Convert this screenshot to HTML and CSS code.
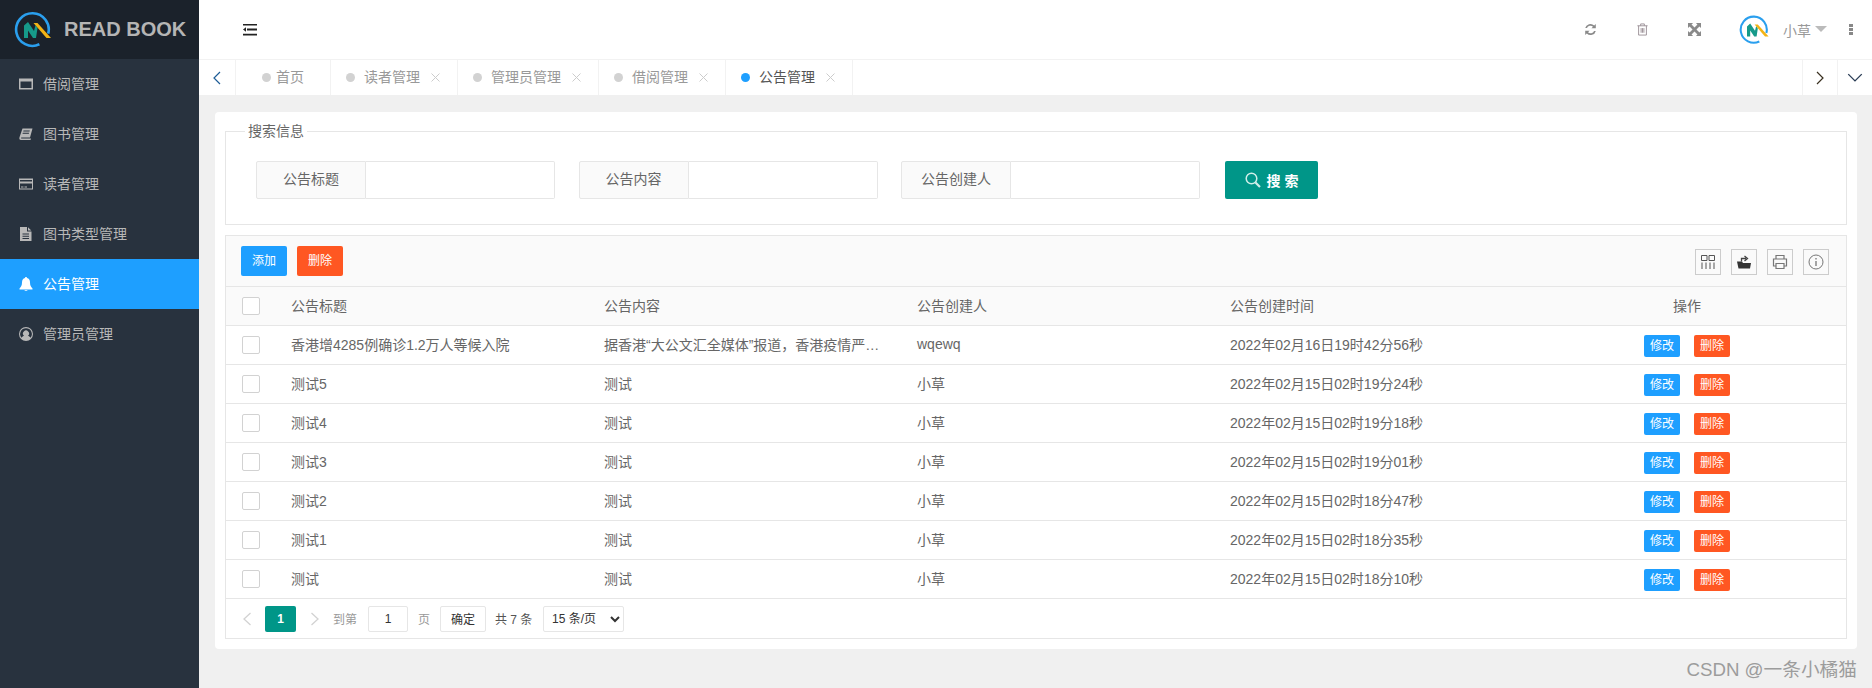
FILE: index.html
```html
<!DOCTYPE html>
<html lang="zh-CN">
<head>
<meta charset="utf-8">
<title>READ BOOK</title>
<link rel="stylesheet" href="styles.css">
</head>
<body>
<svg class="sprite" aria-hidden="true">
  <symbol id="logo" viewBox="0 0 40 40">
    <path d="M34.2 23.7A16.3 16.3 0 1 0 25.4 34.3" fill="none" stroke="#2a9fee" stroke-width="2.6"/>
    <path d="M10 28V15.5L14 12L20 21L21.5 15L23.5 18L22 28H19L14 20.5V28Z" fill="#169a8a"/>
    <path d="M19.5 13H23.5L37 28H32.5Z" fill="#f2b316"/>
  </symbol>
</svg>
<div class="app">
  <aside class="sidebar">
    <div class="brand">
      <svg class="brand-logo"><use href="#logo"/></svg>
      <span class="brand-name">READ BOOK</span>
    </div>
    <nav class="menu">
      <a class="menu-item">
        <svg class="menu-icon" viewBox="0 0 14 14"><path d="M0 1.500H14V12.500H0ZM1.500 4.500V11H12.500V4.500Z" fill="currentColor" fill-rule="evenodd"/></svg>
        <span>借阅管理</span>
      </a>
      <a class="menu-item">
        <svg class="menu-icon" viewBox="0 0 14 14"><path d="M3.500 1.500H13.500L11 10.500H2.500C1.800 10.500 1.800 11.500 2.500 11.500H12L11.500 13H2C0.500 13 0 11.800 0.500 10.300ZM4.500 3.500L4.200 4.500H10.500L10.800 3.500ZM3.800 5.800L3.500 6.800H9.800L10.100 5.800Z" fill="currentColor" fill-rule="evenodd"/></svg>
        <span>图书管理</span>
      </a>
      <a class="menu-item">
        <svg class="menu-icon" viewBox="0 0 14 14"><path d="M0 1.500H14V12.500H0ZM1 3V4.500H13V3ZM1 6.500V11.500H13V6.500ZM2 9.500H4.500V10.500H2ZM5.500 9.500H8V10.500H5.500Z" fill="currentColor" fill-rule="evenodd"/></svg>
        <span>读者管理</span>
      </a>
      <a class="menu-item">
        <svg class="menu-icon" viewBox="0 0 14 14"><path d="M1 0H8V4.500H12.500V14H1ZM9 0.200L12.300 3.500H9ZM3.500 6.500V7.500H10V6.500ZM3.500 8.800V9.800H10V8.800ZM3.500 11V12H10V11Z" fill="currentColor" fill-rule="evenodd"/></svg>
        <span>图书类型管理</span>
      </a>
      <a class="menu-item is-active">
        <svg class="menu-icon" viewBox="0 0 14 14"><path d="M7 0C7.600 0 8 .4 8 1C10 1.500 11 3 11 5.500C11 8.500 12 10 13.500 11.500V12.500H.5V11.500C2 10 3 8.500 3 5.500C3 3 4 1.500 6 1C6 .4 6.400 0 7 0ZM5.300 13.200H8.700C8.500 14.200 5.500 14.200 5.300 13.200Z" fill="currentColor"/></svg>
        <span>公告管理</span>
      </a>
      <a class="menu-item">
        <svg class="menu-icon" viewBox="0 0 14 14"><path d="M7 0A7 7 0 1 1 7 14A7 7 0 0 1 7 0ZM7 1.200A5.800 5.800 0 0 0 2.500 10.700C3.200 9.500 4.200 8.900 5 8.700A3 3 0 1 1 9 8.700C9.800 8.900 10.800 9.500 11.500 10.700A5.800 5.800 0 0 0 7 1.200Z" fill="currentColor" fill-rule="evenodd"/></svg>
        <span>管理员管理</span>
      </a>
    </nav>
  </aside>

  <main class="main">
    <header class="topbar">
      <svg class="toggle" viewBox="0 0 14 12"><path d="M0 0H14V1.600H0ZM4 4.500H14V6.500H4ZM0 9.800H14V11.400H0ZM3 3.200V7.800L0 5.500Z" fill="#222"/></svg>
      <div class="top-actions">
        <span class="top-action">
          <svg class="top-icon" viewBox="0 0 14 14"><path d="M1.300 5.500A5.800 5.800 0 0 1 11 2.700L12.700 1V5.700H8L9.700 4A4 4 0 0 0 3.200 5.500ZM12.700 8.500A5.800 5.800 0 0 1 3 11.300L1.300 13V8.300H6L4.300 10A4 4 0 0 0 10.800 8.500Z" fill="#8a8a8a"/></svg>
        </span>
        <span class="top-action">
          <svg class="top-icon" viewBox="0 0 14 14"><path d="M1.500 3H12.500M5 3V1H9V3M2.800 3V13H11.200V3M5.500 5.500V10.500M7 5.500V10.500M8.500 5.500V10.500" fill="none" stroke="#9a9096" stroke-width="1"/></svg>
        </span>
        <span class="top-action">
          <svg class="top-icon" viewBox="0 0 14 14"><path d="M0 0H5.500L3.800 1.700L7 4.900L10.200 1.700L8.500 0H14V5.500L12.300 3.800L9.100 7L12.300 10.200L14 8.500V14H8.500L10.200 12.300L7 9.100L3.800 12.300L5.500 14H0V8.500L1.700 10.200L4.900 7L1.700 3.800L0 5.500Z" fill="#8a8a8a"/></svg>
        </span>
        <svg class="avatar"><use href="#logo"/></svg>
        <span class="user-name">小草</span>
        <span class="caret"></span>
        <span class="kebab"><i></i><i></i><i></i></span>
      </div>
    </header>

    <div class="tabs">
      <span class="tab-arrow tab-arrow-left">
        <svg class="chev" viewBox="0 0 8 14"><path d="M7 1L1 7L7 13" fill="none" stroke="#1d5c96" stroke-width="1.200"/></svg>
      </span>
      <span class="tab tab-home"><i class="dot"></i><span class="tab-text">首页</span></span>
      <span class="tab"><i class="dot"></i><span class="tab-text">读者管理</span><svg class="close" viewBox="0 0 9 9"><path d="M.5 .5L8.500 8.500M8.500 .5L.5 8.500" stroke="#ccc"/></svg></span>
      <span class="tab"><i class="dot"></i><span class="tab-text">管理员管理</span><svg class="close" viewBox="0 0 9 9"><path d="M.5 .5L8.500 8.500M8.500 .5L.5 8.500" stroke="#ccc"/></svg></span>
      <span class="tab"><i class="dot"></i><span class="tab-text">借阅管理</span><svg class="close" viewBox="0 0 9 9"><path d="M.5 .5L8.500 8.500M8.500 .5L.5 8.500" stroke="#ccc"/></svg></span>
      <span class="tab is-current"><i class="dot"></i><span class="tab-text">公告管理</span><svg class="close" viewBox="0 0 9 9"><path d="M.5 .5L8.500 8.500M8.500 .5L.5 8.500" stroke="#ccc"/></svg></span>
      <span class="tab-spacer"></span>
      <span class="tab-arrow tab-arrow-right">
        <svg class="chev" viewBox="0 0 8 14"><path d="M1 1L7 7L1 13" fill="none" stroke="#3a3020" stroke-width="1.200"/></svg>
      </span>
      <span class="tab-arrow tab-arrow-down">
        <svg class="chev-down" viewBox="0 0 14 8"><path d="M1 1L7 7L13 1" fill="none" stroke="#2a3c55" stroke-width="1.200"/></svg>
      </span>
    </div>

    <div class="content">
      <section class="card">
        <fieldset class="search">
          <legend>搜索信息</legend>
          <form class="search-row">
            <div class="field"><label class="field-label">公告标题</label><input class="field-input" type="text"></div>
            <div class="field"><label class="field-label">公告内容</label><input class="field-input" type="text"></div>
            <div class="field"><label class="field-label">公告创建人</label><input class="field-input" type="text"></div>
            <button class="search-btn" type="button">
              <svg class="search-icon" viewBox="0 0 16 16"><circle cx="6.500" cy="6.500" r="5.300" fill="none" stroke="#cfeee9" stroke-width="1.500"/><path d="M10.500 10.500L15 15" stroke="#cfeee9" stroke-width="2.200"/></svg>
              <span>搜 索</span>
            </button>
          </form>
        </fieldset>

        <div class="grid">
          <div class="toolbar">
            <button class="btn btn-blue btn-md" type="button">添加</button>
            <button class="btn btn-orange btn-md" type="button">删除</button>
            <div class="tools">
              <span class="tool"><svg viewBox="0 0 16 16"><path d="M1.500 1.500H7V6.500H1.500ZM9 1.500H14.500V6.500H9ZM2 8.500V15M6 8.500V15M10 8.500V15M14 8.500V15" fill="none" stroke="#555" stroke-width="1"/></svg></span>
              <span class="tool"><svg viewBox="0 0 16 16"><path d="M1 7.500H6L7 9H15L14 14.500H2.500Z" fill="#333"/><path d="M5.500 7.500V4.500H10M8.500 2L11.500 4.500L8.500 7" fill="none" stroke="#444" stroke-width="1.300"/></svg></span>
              <span class="tool"><svg viewBox="0 0 16 16"><path d="M4 5V1.500H12V5M4 12H1.500V5H14.500V12H12M4 9.500H12V14.500H4Z" fill="none" stroke="#777" stroke-width="1.200"/></svg></span>
              <span class="tool"><svg viewBox="0 0 16 16"><circle cx="8" cy="8" r="7" fill="none" stroke="#777"/><path d="M8 7V12M8 4V5.500" stroke="#777" stroke-width="1.300"/></svg></span>
            </div>
          </div>
          <table class="table">
            <colgroup>
              <col class="col-check"><col class="col-main"><col class="col-main"><col class="col-main"><col class="col-main"><col>
            </colgroup>
            <thead>
              <tr>
                <th class="cell-check"><span class="check"></span></th>
                <th>公告标题</th><th>公告内容</th><th>公告创建人</th><th>公告创建时间</th><th class="cell-op">操作</th>
              </tr>
            </thead>
            <tbody>
              <tr><td class="cell-check"><span class="check"></span></td><td>香港增4285例确诊1.2万人等候入院</td><td>据香港“大公文汇全媒体”报道，香港疫情严…</td><td>wqewq</td><td>2022年02月16日19时42分56秒</td><td class="cell-act"><button class="btn btn-blue btn-xs" type="button">修改</button><button class="btn btn-orange btn-xs" type="button">删除</button></td></tr>
              <tr><td class="cell-check"><span class="check"></span></td><td>测试5</td><td>测试</td><td>小草</td><td>2022年02月15日02时19分24秒</td><td class="cell-act"><button class="btn btn-blue btn-xs" type="button">修改</button><button class="btn btn-orange btn-xs" type="button">删除</button></td></tr>
              <tr><td class="cell-check"><span class="check"></span></td><td>测试4</td><td>测试</td><td>小草</td><td>2022年02月15日02时19分18秒</td><td class="cell-act"><button class="btn btn-blue btn-xs" type="button">修改</button><button class="btn btn-orange btn-xs" type="button">删除</button></td></tr>
              <tr><td class="cell-check"><span class="check"></span></td><td>测试3</td><td>测试</td><td>小草</td><td>2022年02月15日02时19分01秒</td><td class="cell-act"><button class="btn btn-blue btn-xs" type="button">修改</button><button class="btn btn-orange btn-xs" type="button">删除</button></td></tr>
              <tr><td class="cell-check"><span class="check"></span></td><td>测试2</td><td>测试</td><td>小草</td><td>2022年02月15日02时18分47秒</td><td class="cell-act"><button class="btn btn-blue btn-xs" type="button">修改</button><button class="btn btn-orange btn-xs" type="button">删除</button></td></tr>
              <tr><td class="cell-check"><span class="check"></span></td><td>测试1</td><td>测试</td><td>小草</td><td>2022年02月15日02时18分35秒</td><td class="cell-act"><button class="btn btn-blue btn-xs" type="button">修改</button><button class="btn btn-orange btn-xs" type="button">删除</button></td></tr>
              <tr><td class="cell-check"><span class="check"></span></td><td>测试</td><td>测试</td><td>小草</td><td>2022年02月15日02时18分10秒</td><td class="cell-act"><button class="btn btn-blue btn-xs" type="button">修改</button><button class="btn btn-orange btn-xs" type="button">删除</button></td></tr>
            </tbody>
          </table>
          <div class="pager">
            <svg class="pager-arrow" viewBox="0 0 10 16"><path d="M8.500 2L2 8L8.500 14" fill="none" stroke="#d2d2d2" stroke-width="1.300"/></svg>
            <span class="pager-current">1</span>
            <svg class="pager-arrow" viewBox="0 0 10 16"><path d="M1.500 2L8 8L1.500 14" fill="none" stroke="#d2d2d2" stroke-width="1.300"/></svg>
            <span class="pager-text pager-goto">到第</span>
            <input class="pager-input" type="text" value="1">
            <span class="pager-text pager-unit">页</span>
            <button class="pager-btn" type="button">确定</button>
            <span class="pager-count">共 7 条</span>
            <select class="pager-select"><option>15 条/页</option><option>30 条/页</option></select>
          </div>
        </div>
      </section>
    </div>
  </main>
</div>
<div class="watermark">CSDN @一条小橘猫</div>
</body>
</html>
```
FILE: styles.css
```css
* { box-sizing: border-box; }
html, body { height: 100%; }
body {
  margin: 0;
  overflow: hidden;
  font-family: "Liberation Sans", "Noto Sans CJK SC", sans-serif;
  font-size: 14px;
  color: #666;
  background: #f0f0f0;
}
.sprite { display: none; }
.app { display: flex; height: 688px; }

/* sidebar */
.sidebar { width: 199px; flex: none; background: #28323e; }
.brand {
  height: 59px;
  display: flex;
  align-items: center;
  background: #1b222b;
}
.brand-logo { width: 40px; height: 40px; margin-left: 14px; }
.brand-name {
  margin-left: 10px;
  font-size: 20px;
  font-weight: 700;
  color: #b5b5b5;
  white-space: nowrap;
}
.menu { display: flex; flex-direction: column; }
.menu-item {
  height: 50px;
  padding-left: 19px;
  display: flex;
  align-items: center;
  gap: 10px;
  color: #b8b8b8;
}
.menu-item span { margin-bottom: 2px; }
.menu-item.is-active { background: #1e9fff; color: #fff; }
.menu-icon { width: 14px; height: 14px; flex: none; }

/* main column */
.main { flex: 1; min-width: 0; display: flex; flex-direction: column; }
.topbar {
  height: 60px;
  flex: none;
  display: flex;
  align-items: center;
  background: #fff;
  border-bottom: 1px solid #f2f2f2;
}
.toggle { width: 14px; height: 12px; margin-left: 44px; }
.top-actions {
  margin-left: auto;
  padding-right: 19px;
  display: flex;
  align-items: center;
}
.top-action { width: 52px; display: flex; justify-content: center; }
.top-icon { width: 13px; height: 13px; }
.avatar { width: 32px; height: 32px; margin-left: 19px; }
.user-name { margin-left: 12px; color: #999; }
.caret {
  width: 0;
  height: 0;
  margin: 0 22px 2px 4px;
  border-left: 6px solid transparent;
  border-right: 6px solid transparent;
  border-top: 6px solid #bbb;
}
.kebab { width: 4px; display: flex; flex-direction: column; gap: 1px; }
.kebab i { width: 4px; height: 3px; background: #888; }

/* tabs */
.tabs {
  height: 35px;
  flex: none;
  display: flex;
  background: #fff;
  color: #999;
}
.tab-arrow {
  display: flex;
  align-items: center;
  justify-content: center;
  flex: none;
}
.tab-arrow-left { width: 37px; border-right: 1px solid #f2f2f2; }
.tab-arrow-right { width: 35px; border-left: 1px solid #f2f2f2; }
.tab-arrow-down { width: 35px; border-left: 1px solid #f2f2f2; }
.chev { width: 8px; height: 14px; }
.chev-down { width: 16px; height: 9px; }
.tab {
  display: flex;
  align-items: center;
  flex: none;
  padding: 0 17px 0 15px;
  border-right: 1px solid #f2f2f2;
  white-space: nowrap;
}
.tab-text { margin-bottom: 4px; }
.tab-home { padding: 0 26px; }
.dot {
  width: 9px;
  height: 9px;
  margin-right: 9px;
  border-radius: 50%;
  background: #d2d2d2;
}
.tab-home .dot { margin-right: 5px; }
.is-current { color: #555; }
.is-current .dot { background: #1e9fff; }
.close { width: 9px; height: 9px; margin-left: 11px; }
.tab-spacer { flex: 1; }

/* content */
.content { flex: 1; padding: 17px 15px 0 16px; min-height: 0; }
.card {
  height: 537px;
  padding: 9px 10px 10px;
  background: #fff;
  border-radius: 4px;
}
.search {
  margin: 0;
  padding: 20px 30px 25px;
  min-width: 0;
  border: 1px solid #e6e6e6;
}
.search legend {
  margin-left: -11px;
  padding: 0 3px;
  line-height: 20px;
  color: #666;
}
.search-row { display: flex; gap: 23.5px; }
.field { width: 299px; height: 38px; display: flex; }
.field-label {
  width: 110px;
  flex: none;
  line-height: 35px;
  text-align: center;
  background: #fafafa;
  border: 1px solid #e6e6e6;
  border-radius: 2px 0 0 2px;
}
.field-input {
  flex: 1;
  min-width: 0;
  border: 1px solid #e6e6e6;
  border-left: 0;
  border-radius: 0 2px 2px 0;
  background: #fff;
  outline: none;
}
.search-btn {
  width: 93px;
  height: 38px;
  margin-left: 1.5px;
  padding: 0;
  display: flex;
  align-items: center;
  justify-content: center;
  gap: 6px;
  border: 0;
  border-radius: 2px;
  background: #009688;
  color: #fff;
  font: inherit;
  font-weight: 700;
}
.search-icon { width: 16px; height: 16px; }

/* grid */
.grid { margin-top: 10px; border: 1px solid #e6e6e6; }
.toolbar {
  height: 51px;
  padding: 10px 17px 0 15px;
  display: flex;
  align-items: flex-start;
  gap: 10px;
  background: #fafafa;
  border-bottom: 1px solid #e6e6e6;
}
.btn {
  border: 0;
  padding: 0;
  border-radius: 2px;
  color: #fff;
  font: inherit;
  font-size: 12px;
  line-height: 1;
  vertical-align: top;
}
.btn-md { width: 46px; height: 30px; }
.btn-xs { width: 36px; height: 22px; }
.btn-xs + .btn-xs { margin-left: 14px; }
.btn-blue { background: #1e9fff; }
.btn-orange { background: #ff5722; }
.tools { margin-left: auto; margin-top: 3px; display: flex; gap: 10px; }
.tool {
  width: 26px;
  height: 26px;
  display: flex;
  align-items: center;
  justify-content: center;
  border: 1px solid #ccc;
}
.tool svg { width: 16px; height: 16px; }

.table { width: 100%; table-layout: fixed; border-collapse: separate; border-spacing: 0; }
.col-check { width: 50px; }
.col-main { width: 313px; }
.table th, .table td {
  height: 39px;
  padding: 0 15px 2px;
  font-weight: 400;
  text-align: left;
  white-space: nowrap;
  border-bottom: 1px solid #e6e6e6;
}
.table th { background: #fafafa; }
.table .cell-check { padding: 0 0 0 16px; }
.table .cell-op { padding: 0 0 2px; text-align: center; }
.table .cell-act { padding: 2px 0 0; text-align: center; }
.check {
  display: block;
  width: 18px;
  height: 18px;
  background: #fff;
  border: 1px solid #d2d2d2;
  border-radius: 2px;
}

/* pager */
.pager {
  height: 39px;
  padding-left: 16px;
  display: flex;
  align-items: center;
  font-size: 12px;
  color: #333;
}
.pager-arrow { width: 10px; height: 16px; }
.pager-current {
  width: 31px;
  height: 26px;
  margin: 0 14px 0 13px;
  line-height: 26px;
  text-align: center;
  font-weight: 700;
  color: #fff;
  background: #009688;
  border-radius: 2px;
}
.pager-text { color: #999; }
.pager-goto { margin-left: 13px; margin-right: 11px; }
.pager-unit { margin: 0 10px; }
.pager-input {
  width: 40px;
  height: 26px;
  padding: 0;
  text-align: center;
  font: inherit;
  color: #333;
  border: 1px solid #e6e6e6;
  border-radius: 2px;
  outline: none;
}
.pager-btn {
  width: 46px;
  height: 26px;
  padding: 0;
  background: #fff;
  border: 1px solid #e6e6e6;
  border-radius: 2px;
  font: inherit;
  color: #333;
}
.pager-count { margin: 0 10px 0 9px; width: 38px; color: #555; white-space: nowrap; }
.pager-select {
  width: 81px;
  height: 26px;
  padding: 0 0 0 4px;
  font: inherit;
  color: #333;
  background: #fff;
  border: 1px solid #e6e6e6;
  border-radius: 2px;
  outline: none;
}

.watermark {
  position: absolute;
  right: 15px;
  top: 658px;
  font-size: 18.7px;
  line-height: 24px;
  color: #9c9c9c;
  white-space: nowrap;
}
```
